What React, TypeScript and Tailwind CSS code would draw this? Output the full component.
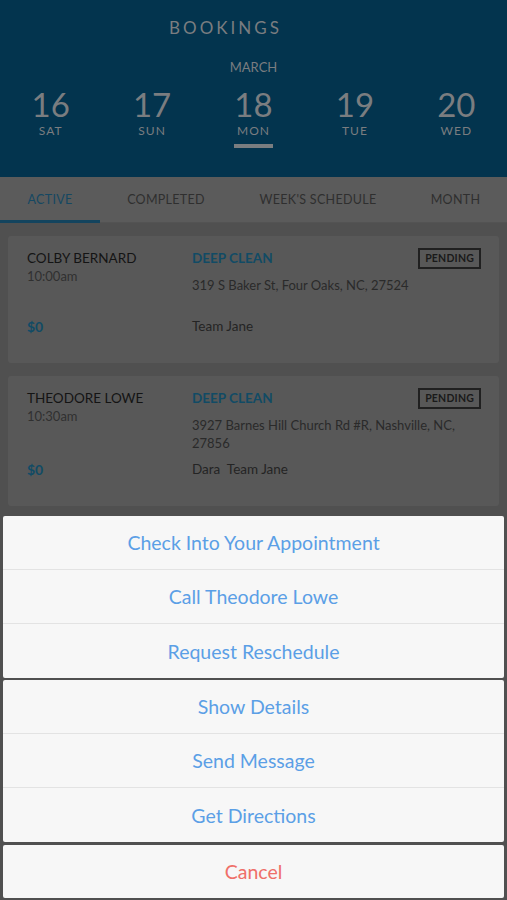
const days = [
  { n: "16", d: "SAT" },
  { n: "17", d: "SUN" },
  { n: "18", d: "MON", active: true },
  { n: "19", d: "TUE" },
  { n: "20", d: "WED" },
]

const tabs = ["ACTIVE", "COMPLETED", "WEEK'S SCHEDULE", "MONTH"]

/** 预约卡片 */
function BookingCard({
  name,
  time,
  address,
  team,
}: {
  name: string
  time: string
  address: string
  team: string
}) {
  return (
    <div className="bg-[#585858] rounded-[3px] pl-[19px] pr-[18px] pt-[13px] pb-[28px] flex flex-col">
      <div className="min-h-[60px] flex">
        <div className="w-[165px] shrink-0 flex flex-col">
          <span className="text-[13.5px] leading-[18px] text-[#141414]">{name}</span>
          <span className="text-[13px] leading-[18px] text-[#303030]">{time}</span>
        </div>
        <div className="flex-1 flex flex-col">
          <div className="flex items-start justify-between">
            <span className="text-[13.5px] leading-[18px] font-bold text-[#114b65]">DEEP CLEAN</span>
            <span className="mt-[-1px] border-2 border-[#202020] px-[5px] h-[21px] flex items-center text-[10.5px] font-bold tracking-[0.2px] text-[#1a1a1a]">
              PENDING
            </span>
          </div>
          <span className="mt-[7px] text-[13px] leading-[18px] text-[#2a2a2a] pr-[10px]">{address}</span>
        </div>
      </div>
      <div className="mt-[8px] h-[18px] flex items-center">
        <span className="w-[165px] shrink-0 text-[14px] font-bold text-[#114b65]">$0</span>
        <span className="text-[13.5px] text-[#242424] whitespace-pre">{team}</span>
      </div>
    </div>
  )
}

function SheetRow({ label, last, red }: { label: string; last?: boolean; red?: boolean }) {
  return (
    <div
      className={`h-[54px] flex items-center justify-center pt-[1px] text-[19.5px] ${
        red ? "text-[#ef6f69]" : "text-[#5b9fe6]"
      } ${last ? "" : "border-b border-[#e3e3e3]"}`}
    >
      {label}
    </div>
  )
}

export default function App() {
  return (
    <div
      className="relative w-[507px] h-[900px] overflow-hidden bg-[#505050]"
      style={{ fontFamily: "Lato, 'Open Sans', sans-serif" }}
    >
      {/* header */}
      <div className="h-[177px] bg-[#03344e] flex flex-col items-center text-[#7a7d80]">
        <div className="mt-[16px] h-[24px] flex items-center pr-[56px] text-[17px] tracking-[3px]">BOOKINGS</div>
        <div className="mt-[20px] h-[16px] flex items-center text-[13px]">MARCH</div>
        <div className="mt-[13px] w-full grid grid-cols-5">
          {days.map((d) => (
            <div key={d.n} className="flex flex-col items-center">
              <span className="text-[33px] leading-[30px]">{d.n}</span>
              <span className="mt-[4px] text-[12px] leading-[16px] tracking-[1px]">{d.d}</span>
              {d.active && <span className="mt-[5px] w-[39px] h-[4px] bg-[#7a7d80]" />}
            </div>
          ))}
        </div>
      </div>

      {/* tabs */}
      <div className="h-[46px] bg-[#5b5b5b] flex items-stretch border-b border-[#535353]">
        {tabs.map((t, i) => (
          <div
            key={t}
            className={`relative flex items-center justify-center pt-[1px] text-[12.5px] tracking-[0.3px] ${
              i === 0
                ? "w-[100px] text-[#154862]"
                : i === 1
                  ? "w-[132px] text-[#2f2f2f]"
                  : i === 2
                    ? "w-[172px] text-[#2f2f2f]"
                    : "flex-1 text-[#2f2f2f]"
            }`}
          >
            {t}
            {i === 0 && <span className="absolute left-0 right-0 bottom-[-1px] h-[3px] bg-[#13445e]" />}
          </div>
        ))}
      </div>

      {/* list */}
      <div className="px-[8px] pt-[13px] flex flex-col gap-[13px]">
        <BookingCard name="COLBY BERNARD" time="10:00am" address="319 S Baker St, Four Oaks, NC, 27524" team="Team Jane" />
        <BookingCard
          name="THEODORE LOWE"
          time="10:30am"
          address="3927 Barnes Hill Church Rd #R, Nashville, NC, 27856"
          team="Dara  Team Jane"
        />
        <BookingCard name="DARA KING" time="11:00am" address="100 Main St, Smithfield, NC, 27577" team="Team Jane" />
      </div>

      {/* action sheet */}
      <div className="absolute left-[3px] right-[3px] bottom-[2px] flex flex-col">
        <div className="bg-[#f7f7f7] rounded-[2px]">
          <SheetRow label="Check Into Your Appointment" />
          <SheetRow label="Call Theodore Lowe" />
          <SheetRow label="Request Reschedule" last />
        </div>
        <div className="mt-[2px] bg-[#f7f7f7] rounded-[2px]">
          <SheetRow label="Show Details" />
          <SheetRow label="Send Message" />
          <SheetRow label="Get Directions" last />
        </div>
        <div className="mt-[3px] bg-[#f7f7f7] rounded-[2px] [&>div]:h-[53px]">
          <SheetRow label="Cancel" last red />
        </div>
      </div>
    </div>
  )
}
